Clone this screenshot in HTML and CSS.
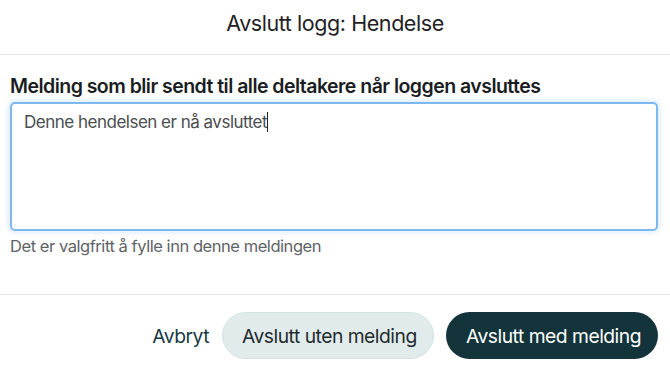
FILE: index.html
```html
<!DOCTYPE html>
<html lang="no">
<head>
<meta charset="utf-8">
<link rel="stylesheet" href="styles.css">
</head>
<body>
<div class="modal">
  <header class="modal-header">
    <h1 class="modal-title">Avslutt logg: Hendelse</h1>
  </header>
  <section class="modal-body">
    <label class="field-label" for="msg">Melding som blir sendt til alle deltakere når loggen avsluttes</label>
    <div class="textarea"><span>Denne hendelsen er nå avsluttet</span><span class="caret"></span></div>
    <p class="help">Det er valgfritt å fylle inn denne meldingen</p>
  </section>
  <footer class="modal-footer">
    <button class="btn btn-link">Avbryt</button>
    <button class="btn btn-secondary">Avslutt uten melding</button>
    <button class="btn btn-primary">Avslutt med melding</button>
  </footer>
</div>
</body>
</html>
```
FILE: styles.css
```css
* { box-sizing: border-box; }
html, body { margin: 0; padding: 0; background: #fff; }
body {
  font-family: Inter, "Noto Sans", sans-serif;
  color: #1f2224;
}
.modal { width: 670px; height: 373px; display: flex; flex-direction: column; }
.modal-header {
  height: 55px;
  border-bottom: 1px solid #e4e6e7;
  display: flex;
  justify-content: center;
  padding-top: 11px;
}
.modal-title {
  margin: 0;
  font-size: 21.5px;
  line-height: 24px;
  letter-spacing: -0.43px;
  font-weight: 400;
  color: #1f2224;
}
.modal-body {
  padding: 19px 12px 0 10px;
  height: 240px;
  border-bottom: 1px solid #e4e6e7;
}
.field-label {
  display: block;
  font-size: 19.5px;
  font-weight: 600;
  line-height: 24px;
  letter-spacing: -0.53px;
  color: #1a1d1f;
  margin-bottom: 4px;
}
.textarea {
  height: 129px;
  border: 2px solid #7db8ef;
  border-radius: 5px;
  box-shadow: 0 0 4px 2px rgba(125, 184, 239, 0.25);
  padding: 7px 12px;
  font-size: 17px;
  line-height: 22px;
  letter-spacing: -0.5px;
  color: #4a4d50;
}
.caret {
  display: inline-block;
  width: 1px;
  height: 20px;
  background: #222;
  vertical-align: -4px;
}
.help {
  margin: 5px 0 0 0;
  font-size: 16.5px;
  line-height: 20px;
  letter-spacing: -0.45px;
  color: #5e6366;
}
.modal-footer {
  flex: 1;
  display: flex;
  justify-content: flex-end;
  align-items: flex-start;
  padding: 17px 12px 0 0;
  gap: 12px;
}
.btn {
  font-family: Inter, "Noto Sans", sans-serif;
  font-size: 19.3px;
  letter-spacing: -0.5px;
  height: 47px;
  border-radius: 24px;
  padding: 0 19px;
  cursor: pointer;
  border: 1px solid transparent;
  white-space: nowrap;
}
.btn-link { background: none; color: #183a40; padding: 0; }
.btn-secondary { background: #e1ebec; border-color: #d3e2e3; color: #1f2b2e; width: 212px; }
.btn-primary { background: #13343a; color: #fff; width: 212px; }
```
